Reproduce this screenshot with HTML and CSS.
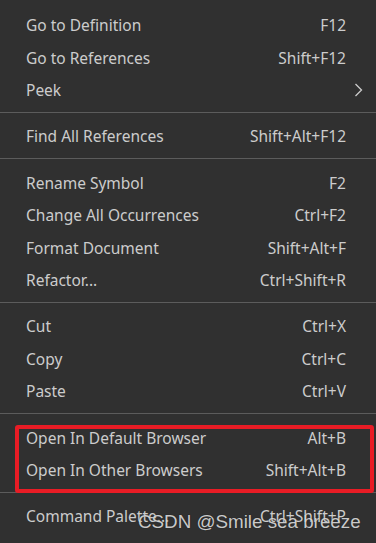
FILE: index.html
```html
<!DOCTYPE html>
<html lang="en">
<head>
    <meta charset="UTF-8">
    <meta name="viewport" content="width=device-width, initial-scale=1.0">
    <title>Context Menu</title>
    <link rel="stylesheet" href="styles.css">
</head>
<body>
    <div class="menu">
        <div class="item"><span>Go to Definition</span><span class="key">F12</span></div>
        <div class="item"><span>Go to References</span><span class="key">Shift+F12</span></div>
        <div class="item item-sub">
            <span>Peek</span>
            <svg class="chevron" width="10" height="14" viewBox="0 0 10 14"><path d="M1.5 1 L7.5 7 L1.5 13" fill="none" stroke="#cccccc" stroke-width="1.3"/></svg>
        </div>
        <div class="sep"></div>

        <div class="item"><span>Find All References</span><span class="key">Shift+Alt+F12</span></div>
        <div class="sep"></div>

        <div class="item"><span>Rename Symbol</span><span class="key">F2</span></div>
        <div class="item"><span>Change All Occurrences</span><span class="key">Ctrl+F2</span></div>
        <div class="item"><span>Format Document</span><span class="key">Shift+Alt+F</span></div>
        <div class="item"><span>Refactor...</span><span class="key">Ctrl+Shift+R</span></div>
        <div class="sep"></div>

        <div class="item"><span>Cut</span><span class="key">Ctrl+X</span></div>
        <div class="item"><span>Copy</span><span class="key">Ctrl+C</span></div>
        <div class="item"><span>Paste</span><span class="key">Ctrl+V</span></div>
        <div class="sep"></div>

        <!-- highlighted group -->
        <div class="group">
            <div class="item"><span>Open In Default Browser</span><span class="key">Alt+B</span></div>
            <div class="item"><span>Open In Other Browsers</span><span class="key">Shift+Alt+B</span></div>
        </div>
        <div class="sep"></div>

        <div class="item"><span>Command Palette...</span><span class="key">Ctrl+Shift+P</span></div>
    </div>

    <div class="watermark">CSDN @Smile sea breeze</div>
</body>
</html>
```

FILE: styles.css
```css
html, body {
    margin: 0;
    padding: 0;
    height: 100%;
    overflow: hidden;
}
body {
    background-color: #303030;
    color: #cccccc;
    font-family: 'Noto Sans', sans-serif;
    font-size: 15.5px;
    position: relative;
}
.menu {
    padding-top: 8.5px;
}
.item {
    display: flex;
    justify-content: space-between;
    align-items: center;
    height: 32.5px;
    padding: 1px 30px 0 26px;
    box-sizing: border-box;
    white-space: nowrap;
}
.item-sub {
    padding-right: 12px;
}
.chevron {
    display: block;
}
.sep {
    height: 1px;
    background-color: #5c5c5c;
    margin: 6.3px 0 6.4px;
}
.group {
    position: relative;
}
.group::after {
    content: "";
    position: absolute;
    left: 15px;
    top: 4px;
    width: 359px;
    height: 68px;
    box-sizing: border-box;
    border: 4px solid #e81c25;
    border-radius: 3px;
}
.watermark {
    position: absolute;
    left: 138px;
    top: 511px;
    font-family: 'Liberation Sans', Arial, sans-serif;
    font-size: 18.8px;
    color: rgba(235, 235, 235, 0.85);
    text-shadow: 0 0 1px rgba(0, 0, 0, 0.6);
    white-space: nowrap;
}
```
